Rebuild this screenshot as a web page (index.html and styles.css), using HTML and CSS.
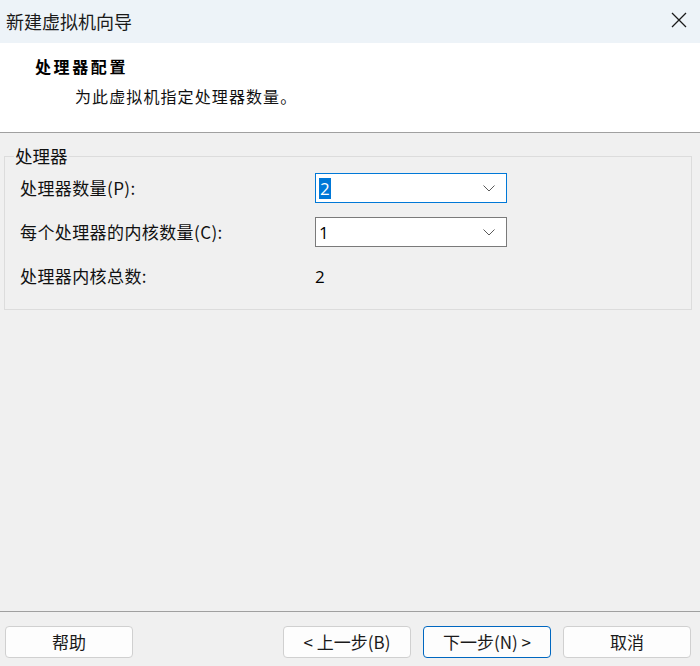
FILE: index.html
```html
<!DOCTYPE html>
<html lang="zh-CN">
<head>
<meta charset="utf-8">
<title>新建虚拟机向导</title>
<link rel="stylesheet" href="styles.css">
</head>
<body>
<div class="window">
  <div class="titlebar">
    <span class="title">新建虚拟机向导</span>
    <span class="close" aria-label="关闭">
      <svg width="16" height="16" viewBox="0 0 16 16"><path d="M1 1 L15 15 M15 1 L1 15" stroke="#1a1a1a" stroke-width="1.3" fill="none"/></svg>
    </span>
  </div>
  <div class="header">
    <div class="heading">处理器配置</div>
    <div class="subheading">为此虚拟机指定处理器数量。</div>
  </div>
  <div class="content">
    <fieldset class="group">
      <legend class="legend">处理器</legend>
      <div class="grid">
        <div class="label">处理器数量(P):</div>
        <div class="combo focused">
          <span class="value"><span class="sel">2</span></span>
          <svg class="chev" width="12" height="7" viewBox="0 0 12 7"><path d="M0.5 0.5 L6 6 L11.5 0.5" stroke="#5a5a5a" stroke-width="1" fill="none"/></svg>
        </div>
        <div class="label">每个处理器的内核数量(C):</div>
        <div class="combo">
          <span class="value">1</span>
          <svg class="chev" width="12" height="7" viewBox="0 0 12 7"><path d="M0.5 0.5 L6 6 L11.5 0.5" stroke="#5a5a5a" stroke-width="1" fill="none"/></svg>
        </div>
        <div class="label">处理器内核总数:</div>
        <div class="total">2</div>
      </div>
    </fieldset>
  </div>
  <div class="footer">
    <button class="btn">帮助</button>
    <div class="spacer"></div>
    <button class="btn">&lt; 上一步(B)</button>
    <button class="btn primary">下一步(N) &gt;</button>
    <button class="btn">取消</button>
  </div>
</div>
</body>
</html>
```

FILE: styles.css
```css
* { box-sizing: border-box; }
html, body {
  margin: 0;
  padding: 0;
}
body {
  width: 700px;
  height: 666px;
  overflow: hidden;
  background: #f0f0f0;
  font-family: "Noto Sans CJK SC", "Noto Sans", sans-serif;
  color: #000;
}
.window {
  width: 700px;
  height: 666px;
  display: flex;
  flex-direction: column;
}
.titlebar {
  height: 43px;
  background: #edf3f8;
  display: flex;
  align-items: center;
  justify-content: space-between;
  padding-left: 6px;
  padding-right: 13px;
}
.title {
  font-size: 18px;
  line-height: 22px;
  color: #1a1a1a;
  margin-top: -2px;
}
.close {
  display: flex;
  width: 16px;
  height: 16px;
  margin-top: -3px;
}
.header {
  height: 90px;
  background: #fff;
  border-bottom: 1px solid #a0a0a0;
  padding-top: 12px;
}
.heading {
  font-size: 16px;
  font-weight: bold;
  letter-spacing: 2.6px;
  line-height: 22px;
  padding-left: 35px;
}
.subheading {
  font-size: 16px;
  letter-spacing: 1.1px;
  line-height: 22px;
  padding-left: 75px;
  margin-top: 8px;
  color: #111;
}
.content {
  flex: 1;
  padding: 12px 8px 0 4px;
}
.group {
  margin: 0;
  border: 1px solid #dcdcdc;
  padding: 6px 10px 16px 15px;
  height: 165px;
}
.legend {
  font-size: 17.5px;
  line-height: 22px;
  padding: 0 1px;
  margin-left: -6px;
  color: #111;
}
.grid {
  display: grid;
  grid-template-columns: 295px 192px;
  grid-auto-rows: 30px;
  row-gap: 14px;
  align-items: center;
}
.label {
  font-size: 17px;
  letter-spacing: 0.4px;
  line-height: 22px;
  color: #111;
}
.combo {
  height: 30px;
  background: #fff;
  border: 1px solid #7a7a7a;
  display: flex;
  align-items: center;
  justify-content: space-between;
  padding-left: 3px;
  padding-right: 11px;
}
.combo.focused {
  border-color: #0078d7;
}
.value {
  font-family: "Open Sans", "Noto Sans", sans-serif;
  font-size: 17px;
  line-height: 21px;
  display: flex;
}
.sel {
  background: #0078d7;
  color: #fff;
  padding: 0 1px;
}
.chev { display: block; }
.total {
  font-family: "Open Sans", "Noto Sans", sans-serif;
  font-size: 17px;
  line-height: 22px;
  padding-left: 0;
  margin-top: 1px;
}
.footer {
  height: 55px;
  border-top: 1px solid #a0a0a0;
  display: flex;
  align-items: flex-start;
  padding: 14px 9px 0 5px;
  gap: 12px;
}
.spacer { flex: 1; }
.btn {
  width: 128px;
  height: 32px;
  background: #fdfdfd;
  border: 1px solid #d0d0d0;
  border-radius: 4px;
  font-family: "Noto Sans CJK SC", "Noto Sans", sans-serif;
  font-size: 17px;
  line-height: 22px;
  color: #1a1a1a;
  padding: 0;
}
.btn.primary {
  border-color: #0067c0;
}
```
